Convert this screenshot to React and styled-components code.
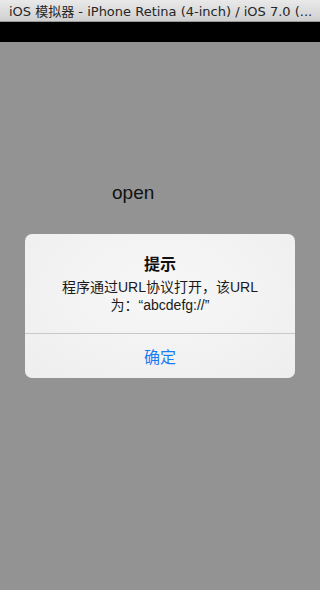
import styled, { createGlobalStyle } from "styled-components";

const GlobalStyle = createGlobalStyle`
  html, body {
    margin: 0;
    padding: 0;
    background: #939393;
  }
  #root {
    width: 320px;
    height: 590px;
  }
`;

const Window = styled.div`
  width: 320px;
  height: 590px;
  display: flex;
  flex-direction: column;
  overflow: hidden;
  font-family: "Liberation Sans", "Noto Sans CJK SC", sans-serif;
`;

const TitleBar = styled.div`
  height: 22px;
  flex-shrink: 0;
  box-sizing: border-box;
  padding-left: 9px;
  display: flex;
  align-items: center;
  background: linear-gradient(#e9e9e9, #d0d0d0);
  border-bottom: 1px solid #9a9a9a;
  color: #262626;
  font-family: "DejaVu Sans", "Noto Sans CJK SC", sans-serif;
  font-size: 13px;
  white-space: nowrap;
  overflow: hidden;
`;

const StatusBar = styled.div`
  height: 20px;
  flex-shrink: 0;
  background: #000;
`;

const Screen = styled.div`
  flex: 1;
  background: #939393;
  display: flex;
  flex-direction: column;
  align-items: flex-start;
`;

const OpenButton = styled.div`
  margin: 140px 0 0 112px;
  font-size: 19px;
  line-height: 22px;
  color: #111;
`;

const Alert = styled.div`
  margin: 30px 0 0 25px;
  width: 270px;
  border-radius: 7px;
  background: radial-gradient(ellipse at 50% 40%, #f7f7f7 0%, #eeeeee 100%);
  overflow: hidden;
  text-align: center;
`;

const AlertBody = styled.div`
  padding: 21px 16px 19px;
`;

const AlertTitle = styled.div`
  font-size: 16px;
  line-height: 20px;
  font-weight: bold;
  color: #111;
`;

const AlertMessage = styled.div`
  margin-top: 3px;
  font-size: 14px;
  line-height: 18px;
  color: #1a1a1a;
`;

const AlertButton = styled.div`
  height: 44px;
  border-top: 1px solid #c8c8c8;
  display: flex;
  align-items: center;
  justify-content: center;
  font-size: 16px;
  color: #1a7cf5;
`;

export default function App() {
  return (
    <>
      <GlobalStyle />
      <Window>
        <TitleBar>iOS 模拟器 - iPhone Retina (4-inch) / iOS 7.0 (...</TitleBar>
        <StatusBar />
        <Screen>
          <OpenButton>open</OpenButton>
          <Alert>
            <AlertBody>
              <AlertTitle>提示</AlertTitle>
              <AlertMessage>
                程序通过URL协议打开，该URL
                <br />
                为：“abcdefg://”
              </AlertMessage>
            </AlertBody>
            <AlertButton>确定</AlertButton>
          </Alert>
        </Screen>
      </Window>
    </>
  );
}
